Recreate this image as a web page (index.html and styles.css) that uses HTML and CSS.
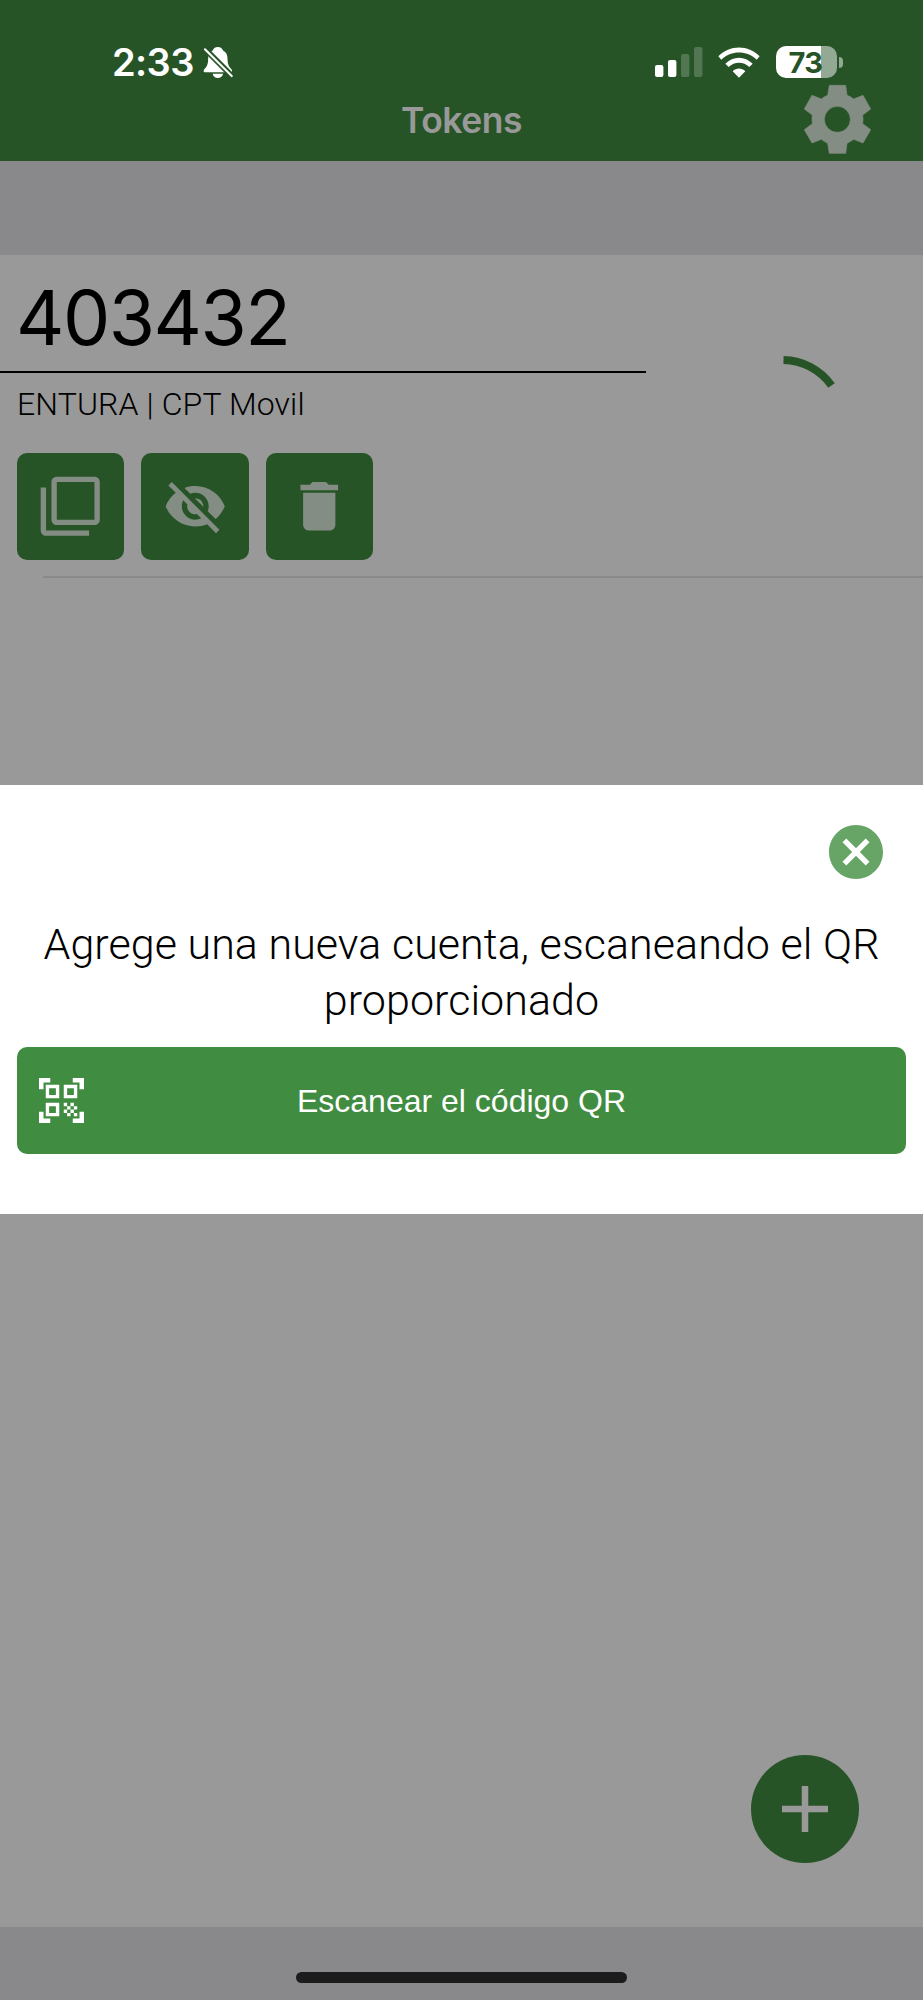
FILE: index.html
```html
<!DOCTYPE html>
<html lang="es">
<head>
<meta charset="utf-8">
<title>Tokens</title>
<link rel="stylesheet" href="styles.css">
</head>
<body>
<div class="app">
  <header class="header">
    <div class="status">
      <span class="time">2:33</span>
      <svg class="bell" viewBox="337 48 96 102" aria-hidden="true">
        <path fill="#fff" d="M383 51c-9 0-14 5-16 11-10 5-14 14-14 26 0 14-3 21-8 27-4 5-6 7-6 10 0 3 2 4 5 4h78c3 0 5-1 5-4 0-3-2-5-6-10-5-6-8-13-8-27 0-12-4-21-14-26-2-6-7-11-16-11zM367 134h32c-1 8-7 13-16 13s-15-5-16-13z"/>
        <path stroke="#275427" stroke-width="18" d="M340 54l90 90"/>
        <path stroke="#fff" stroke-width="6.5" stroke-linecap="round" d="M343 58l83 83"/>
      </svg>
      <svg class="signal" viewBox="0 0 48 30" aria-hidden="true">
        <g fill="#fff"><rect y="18" width="8.4" height="12" rx="2"/><rect x="13" y="13" width="8.4" height="17" rx="2"/></g>
        <g fill="#527652"><rect x="26" y="7" width="8.4" height="23" rx="2"/><rect x="39" width="8.4" height="30" rx="2"/></g>
      </svg>
      <svg class="wifi" viewBox="233 49 126 93" aria-hidden="true">
        <path fill="#fff" d="M234 77c34-35 90-35 124 0l-9 10c-29-29-77-29-106 0zM255 99c23-24 59-24 82 0l-10 10c-17-17-45-17-62 0zM277 122c11-11 27-11 38 0l-19 19z"/>
      </svg>
      <div class="battery"><span class="level">73</span></div>
      <span class="tip"></span>
    </div>
    <h1 class="title">Tokens</h1>
    <svg class="gear" viewBox="488 163 206 212" aria-hidden="true">
      <path fill="#848d84" fill-rule="evenodd" stroke="#848d84" stroke-width="2" stroke-linejoin="round" d="M567 167H616L620 197Q631 201 640 208L668 197 691 238 667 256Q669 269 667 282L691 300 668 340 640 329Q631 336 620 341L616 371H567L562 341Q552 336 543 329L515 340 492 300 516 282Q514 269 516 256L492 238 515 197 543 208Q552 201 562 197ZM591 230a39 39 0 1 0 0 78 39 39 0 1 0 0-78z"/>
    </svg>
  </header>
  <div class="band"></div>
  <main class="list">
    <section class="token">
      <div class="code">403432</div>
      <div class="account">ENTURA | CPT Movil</div>
      <div class="actions">
        <button class="action" aria-label="Copiar"><svg viewBox="0 0 24 24"><path d="M3 5H1v16c0 1.1.9 2 2 2h16v-2H3V5zm18-4H7c-1.1 0-2 .9-2 2v14c0 1.1.9 2 2 2h14c1.1 0 2-.9 2-2V3c0-1.1-.9-2-2-2zm0 16H7V3h14v14z"/></svg></button>
        <button class="action" aria-label="Ocultar"><svg viewBox="0 0 24 24"><path d="M12 7c2.76 0 5 2.24 5 5 0 .65-.13 1.26-.36 1.83l2.92 2.92c1.51-1.26 2.7-2.89 3.43-4.75-1.73-4.39-6-7.5-11-7.5-1.4 0-2.74.25-3.98.7l2.16 2.16C10.74 7.13 11.35 7 12 7zM2 4.27l2.28 2.28.46.46C3.08 8.3 1.78 10.02 1 12c1.73 4.39 6 7.5 11 7.5 1.55 0 3.03-.3 4.38-.84l.42.42L19.73 22 21 20.73 3.27 3 2 4.27zM7.53 9.8l1.55 1.55c-.05.21-.08.43-.08.65 0 1.66 1.34 3 3 3 .22 0 .44-.03.65-.08l1.55 1.55c-.67.33-1.41.53-2.2.53-2.76 0-5-2.24-5-5 0-.79.2-1.53.53-2.2zm4.31-.78l3.15 3.15.02-.16c0-1.66-1.34-3-3-3l-.17.01z"/></svg></button>
        <button class="action" aria-label="Eliminar"><svg viewBox="0 0 24 24"><path d="M6 19c0 1.1.9 2 2 2h8c1.1 0 2-.9 2-2V7H6v12zM19 4h-3.5l-1-1h-5l-1 1H5v2h14V4z"/></svg></button>
      </div>
      <svg class="progress" viewBox="0 0 56 36" aria-hidden="true"><path fill="none" stroke="#275427" stroke-width="8" d="M2.500 6A60 60 0 0 1 50.500 31.500"/></svg>
    </section>
  </main>
  <button class="fab" aria-label="Agregar"><svg viewBox="0 0 46 46"><path stroke="#999" stroke-width="6.500" d="M0 23h46M23 0v46"/></svg></button>
  <footer class="footer"><div class="home"></div></footer>

  <div class="modal" role="dialog">
    <svg class="close" viewBox="2 2 20 20"><path fill="#67a567" d="M12 2C6.47 2 2 6.470 2 12s4.470 10 10 10 10-4.470 10-10S17.530 2 12 2zm5 13.590L15.590 17 12 13.410 8.410 17 7 15.590 10.590 12 7 8.410 8.410 7 12 10.590 15.590 7 17 8.410 13.410 12 17 15.590z"/></svg>
    <p class="message">Agrege una nueva cuenta, escaneando el QR<br>proporcionado</p>
    <button class="scan">
      <svg class="qr" viewBox="2 2 20 20" aria-hidden="true"><path fill="#fff" d="M9.5 6.5v3h-3v-3h3M11 5H5v6h6V5zm-1.500 9.500v3h-3v-3h3M11 13H5v6h6v-6zm6.500-6.500v3h-3v-3h3M19 5h-6v6h6V5zm-6 8h1.500v1.500H13V13zm1.500 1.500H16V16h-1.500v-1.500zM16 13h1.500v1.500H16V13zm-3 3h1.500v1.500H13V16zm1.500 1.500H16V19h-1.500v-1.500zM16 16h1.500v1.500H16V16zm1.500-1.500H19V16h-1.500v-1.500zm0 3H19V19h-1.500v-1.500zM22 7h-2V4h-3V2h5v5zm0 15v-5h-2v3h-3v2h5zM2 22h5v-2H4v-3H2v5zM2 2v5h2V4h3V2H2z"/></svg>
      <span class="scan-label">Escanear el código QR</span>
    </button>
  </div>
</div>
</body>
</html>
```
FILE: styles.css
```css
* { box-sizing: border-box; }
body { margin: 0; }
button { border: 0; padding: 0; }
svg { display: block; }
.app {
  position: relative;
  display: flex;
  flex-direction: column;
  width: 923px;
  height: 2000px;
  overflow: hidden;
  background: #999;
  font-family: Inter, "Liberation Sans", sans-serif;
}
.header {
  position: relative;
  height: 161px;
  padding-top: 46px;
  background: #275427;
}
.status {
  display: flex;
  align-items: center;
  height: 32px;
  padding-left: 112px;
}
.time {
  width: 91px;
  font-size: 38px;
  font-weight: 600;
  line-height: 34px;
  letter-spacing: -0.6px;
  color: #fff;
  white-space: nowrap;
}
.bell { width: 31px; height: 33px; }
.signal { width: 48px; height: 30px; margin-left: 421px; }
.wifi { width: 42px; height: 31px; margin-left: 15px; }
.battery {
  width: 61px;
  height: 32px;
  margin-left: 16px;
  border-radius: 10px;
  background: linear-gradient(90deg, #fff 45px, #93a993 45px);
}
.level {
  display: block;
  padding-right: 2px;
  font-size: 29px;
  font-weight: 700;
  line-height: 33px;
  letter-spacing: -0.5px;
  text-align: center;
  color: #275427;
}
.tip {
  width: 4px;
  height: 11px;
  margin-left: 2px;
  border-radius: 0 5px 5px 0;
  background: #93a993;
}
.title {
  margin: 23px 0 0;
  font-size: 35.5px;
  font-weight: 600;
  line-height: 40px;
  letter-spacing: -0.5px;
  text-align: center;
  color: #999;
}
.gear {
  position: absolute;
  left: 802.7px;
  top: 84.3px;
  width: 68.7px;
  height: 70.7px;
}
.band { height: 94px; background: #89898b; }
.list { flex: 1; }
.token { position: relative; height: 323px; }
.token::after {
  content: "";
  position: absolute;
  left: 43px;
  right: 0;
  bottom: 0;
  height: 2px;
  background: #8a8a8b;
}
.code {
  width: 646px;
  height: 118px;
  padding-left: 16px;
  border-bottom: 2px solid #000;
  font-size: 75px;
  line-height: 125px;
  letter-spacing: -1.5px;
  color: #000;
}
.account {
  height: 80px;
  padding-left: 17px;
  font-family: Roboto, sans-serif;
  font-size: 32px;
  font-weight: 300;
  line-height: 63px;
  letter-spacing: 0.12px;
  color: #000;
}
.actions { display: flex; gap: 17px; padding-left: 17px; }
.action {
  display: grid;
  place-items: center;
  width: 107.400px;
  height: 107px;
  border-radius: 10px;
  background: #275427;
}
.action svg { width: 64.500px; height: 64.500px; fill: #848d84; }
.progress {
  position: absolute;
  left: 781px;
  top: 99px;
  width: 56px;
  height: 36px;
}
.fab {
  position: absolute;
  left: 751px;
  top: 1755px;
  display: grid;
  place-items: center;
  width: 108px;
  height: 108px;
  border-radius: 50%;
  background: #275427;
}
.fab svg { width: 46px; height: 46px; }
.footer { height: 73px; padding-top: 45px; background: #89898b; }
.home {
  width: 331px;
  height: 10.500px;
  margin: 0 auto;
  border-radius: 5.500px;
  background: #1c1c1c;
}
.modal {
  position: absolute;
  left: 0;
  top: 785px;
  width: 923px;
  height: 429px;
  padding: 40px 17px 0;
  background: #fff;
}
.close { width: 54px; height: 54px; margin-left: 812px; }
.message {
  margin: 37px -17px 0;
  font-family: Roboto, sans-serif;
  font-size: 43px;
  font-weight: 300;
  line-height: 56px;
  letter-spacing: 0.05px;
  text-align: center;
  color: #000;
}
.scan {
  position: relative;
  display: flex;
  align-items: center;
  width: 889px;
  height: 107px;
  margin-top: 19px;
  padding: 0 22px;
  border-radius: 10px;
  background: #408c40;
}
.qr { width: 45px; height: 45px; }
.scan-label {
  flex: 1;
  padding-right: 45px;
  font-family: "Liberation Sans", sans-serif;
  font-size: 32px;
  line-height: 40px;
  text-align: center;
  color: #fff;
}
```
